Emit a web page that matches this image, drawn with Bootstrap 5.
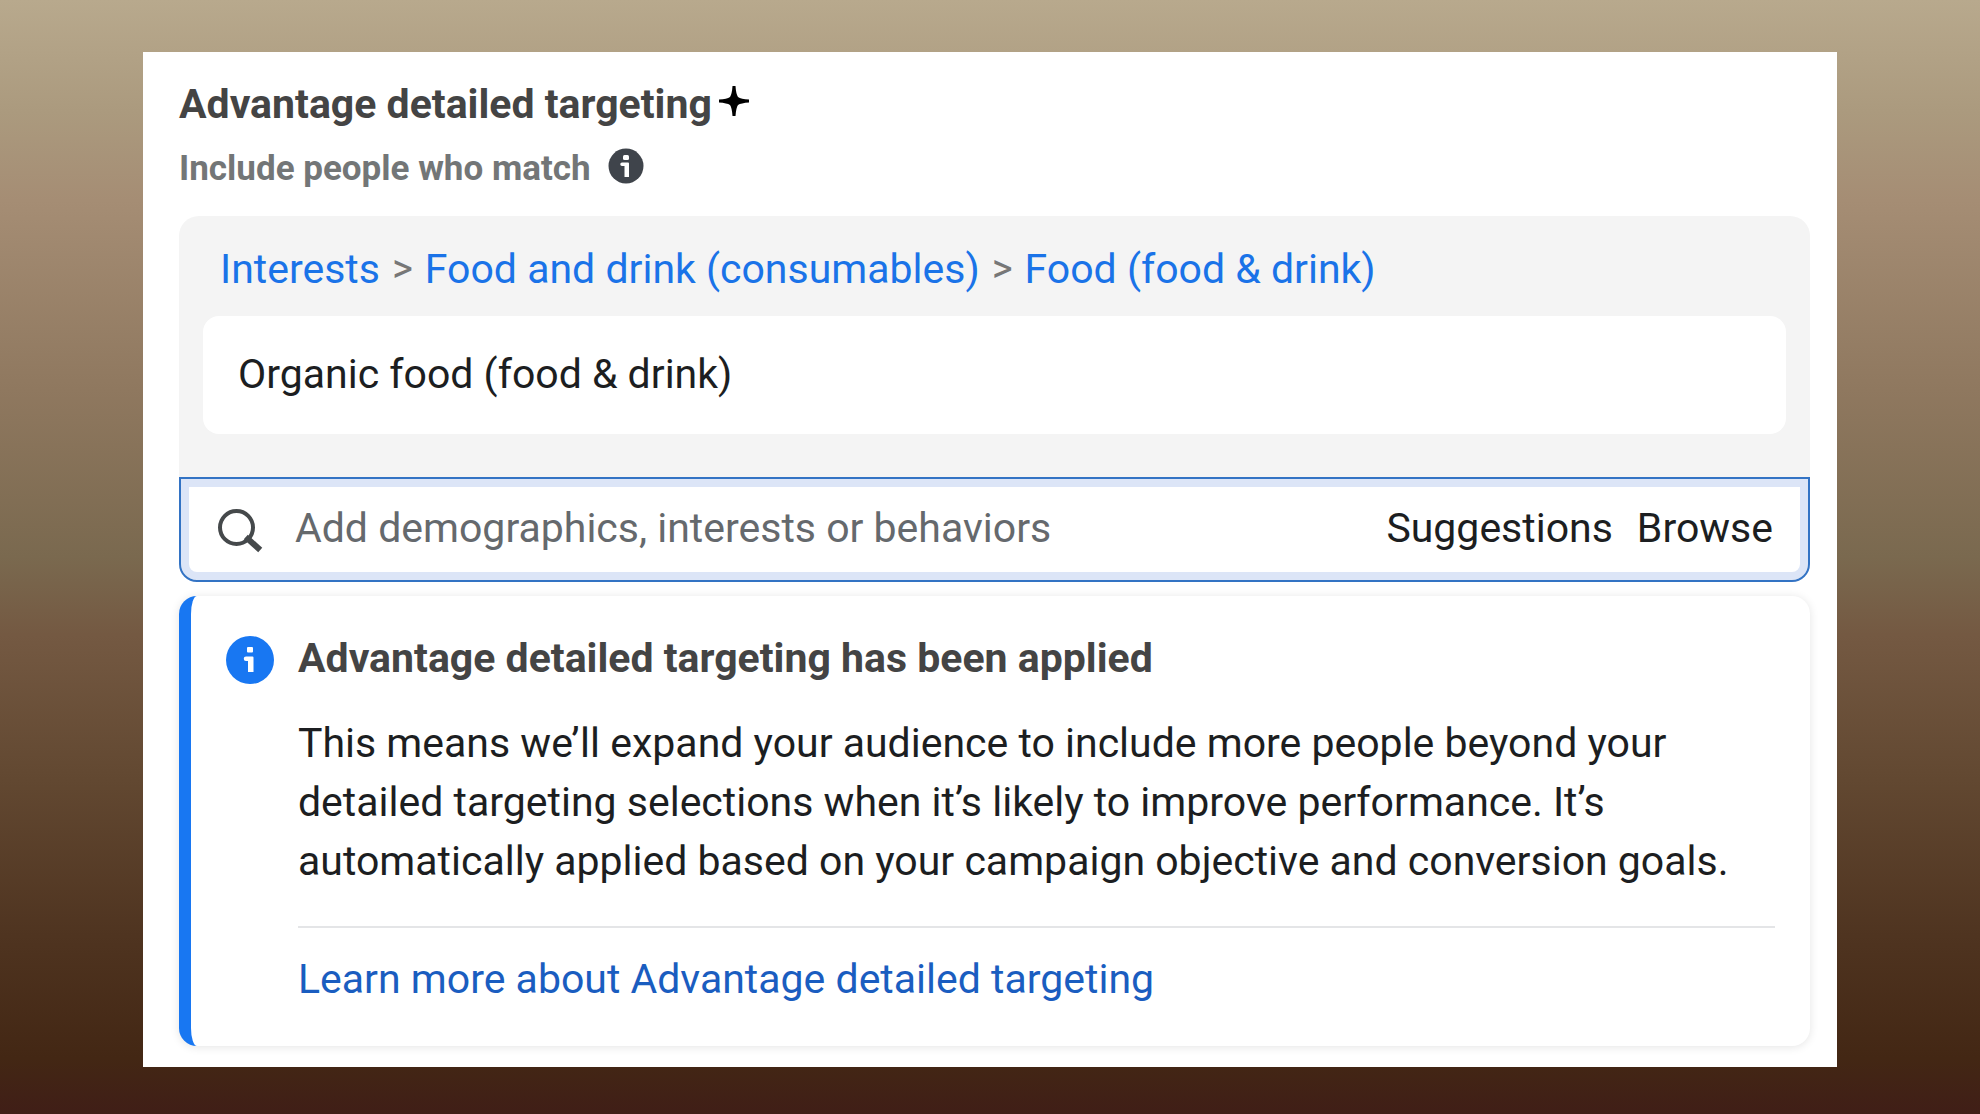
<!DOCTYPE html>
<html lang="en">
<head>
<meta charset="utf-8">
<meta name="viewport" content="width=device-width, initial-scale=1">
<title>Advantage detailed targeting</title>
<link href="https://cdn.jsdelivr.net/npm/bootstrap@5.3.0/dist/css/bootstrap.min.css" rel="stylesheet">
<style>
  body {
    font-family: Roboto, "Liberation Sans", sans-serif;
    font-size: 41px;
    line-height: 59px;
    color: #1c1e21;
    background: linear-gradient(#b8a98d 0%, #ab9a7e 10%, #a58d74 18%, #8f785f 35%, #7a694f 50%, #745942 57%, #624831 70%, #4f3420 84%, #432714 95%, #401e17 100%);
  }
  .stage { padding: 52px 143px 47px; }
  .panel { padding: 22px 27px 21px 36px; }
  .panel-title { font-size: 41px; line-height: 60px; color: #444; gap: 6px; }
  .panel-title svg { margin-bottom: 6px; }
  .sub-title { font-size: 35px; line-height: 59px; color: #737677; margin: 5px 0 18px; gap: 17px; }
  .sub-title svg { margin-bottom: 6px; }
  .picked { background: #f4f4f4; border-radius: 20px 20px 0 0; padding: 23px 24px 43px; }
  .trail { padding-left: 17px; gap: 12px; line-height: 60px; margin-bottom: 17px; }
  .trail a { color: #1a73e8; }
  .crumb-sep { color: #777; font-size: 40px; }
  .picked-item { border-radius: 16px; padding: 29px 35px 30px; }
  .search-box {
    border: 2px solid #3373c4;
    border-radius: 0 0 18px 18px;
    box-shadow: inset 0 0 0 8px #dce5f7;
    padding: 20px 35px 22px 36px;
  }
  .search-box input { font: inherit; color: #1c1e21; margin-left: 32px; outline: 0; min-width: 0; }
  .search-box input::placeholder { color: #65696d; opacity: 1; }
  .plain-btn { color: #1c1e21; }
  .notice {
    border-left: 12px solid #1877f2;
    border-radius: 18px;
    box-shadow: 0 1px 10px rgba(0, 0, 0, .11);
    margin-top: 14px;
    padding: 32px 35px 37px;
    gap: 24px;
  }
  .notice-title { font-size: 41px; line-height: 60px; color: #444; margin-bottom: 26px; }
  .notice-link { color: #1a5dc0; border-top: 2px solid #e4e5e7; margin-top: 35px; padding-top: 22px; }
  .notice-link a { color: inherit; }
  .info-dot { margin-top: 8px; }
</style>
</head>
<body>
<main class="stage min-vh-100">
  <section class="panel bg-white">
    <h1 class="panel-title fw-bold d-flex align-items-center m-0">Advantage detailed targeting
      <svg width="32" height="32" viewBox="0 0 32 32" aria-hidden="true"><path d="M14.500 1h3Q18 9 20 12Q23 14 31 14.500v3Q23 18 20 20Q18 23 17.500 31h-3Q14 23 12 20Q9 18 1 17.500v-3Q9 14 12 12Q14 9 14.500 1Z" fill="#000"/></svg>
    </h1>
    <h2 class="sub-title fw-bold d-flex align-items-center">Include people who match
      <svg width="36" height="36" viewBox="0 0 36 36" aria-hidden="true"><circle cx="18" cy="18" r="17.500" fill="#3f444b"/><rect x="15" y="7" width="6" height="5" rx="1.500" fill="#fff"/><path d="M14 14.500h6a1 1 0 0 1 1 1V29h-4.500V18H14a1.500 1.500 0 0 1 0-3.500z" fill="#fff"/></svg>
    </h2>

    <div class="picked">
      <nav class="trail d-flex" aria-label="Category">
        <a class="text-decoration-none" href="#">Interests</a><span class="crumb-sep">&gt;</span>
        <a class="text-decoration-none" href="#">Food and drink (consumables)</a><span class="crumb-sep">&gt;</span>
        <a class="text-decoration-none" href="#">Food (food &amp; drink)</a>
      </nav>
      <div class="picked-item bg-white">Organic food (food &amp; drink)</div>
    </div>

    <form class="search-box bg-white d-flex align-items-center">
      <svg class="flex-shrink-0 mt-1" width="46" height="46" viewBox="0 0 46 46" aria-hidden="true"><circle cx="19.500" cy="19.500" r="16.500" fill="none" stroke="#45494b" stroke-width="4"/><path d="M31 31 41 40" stroke="#45494b" stroke-width="6" stroke-linecap="square"/></svg>
      <input class="border-0 bg-transparent flex-grow-1 p-0" type="text" aria-label="Add demographics, interests or behaviors" placeholder="Add demographics, interests or behaviors">
      <button class="plain-btn border-0 bg-transparent p-0 me-4" type="button">Suggestions</button>
      <button class="plain-btn border-0 bg-transparent p-0" type="button">Browse</button>
    </form>

    <section class="notice bg-white d-flex align-items-start">
      <svg class="info-dot flex-shrink-0" width="48" height="48" viewBox="0 0 48 48" aria-hidden="true"><circle cx="24" cy="24" r="24" fill="#1877f2"/><rect x="21" y="11" width="6" height="5.500" rx="1" fill="#fff"/><path d="M20 20.500h6.500a1 1 0 0 1 1 1V36H22V25h-2a2 2 0 0 1 0-4.500z" fill="#fff"/></svg>
      <div class="flex-grow-1">
        <h3 class="notice-title fw-bold">Advantage detailed targeting has been applied</h3>
        <p class="m-0">This means we’ll expand your audience to include more people beyond your detailed targeting selections when it’s likely to improve performance. It’s automatically applied based on your campaign objective and conversion goals.</p>
        <div class="notice-link"><a class="text-decoration-none" href="#">Learn more about Advantage detailed targeting</a></div>
      </div>
    </section>
  </section>
</main>
<script src="https://cdn.jsdelivr.net/npm/bootstrap@5.3.0/dist/js/bootstrap.bundle.min.js"></script>
</body>
</html>
